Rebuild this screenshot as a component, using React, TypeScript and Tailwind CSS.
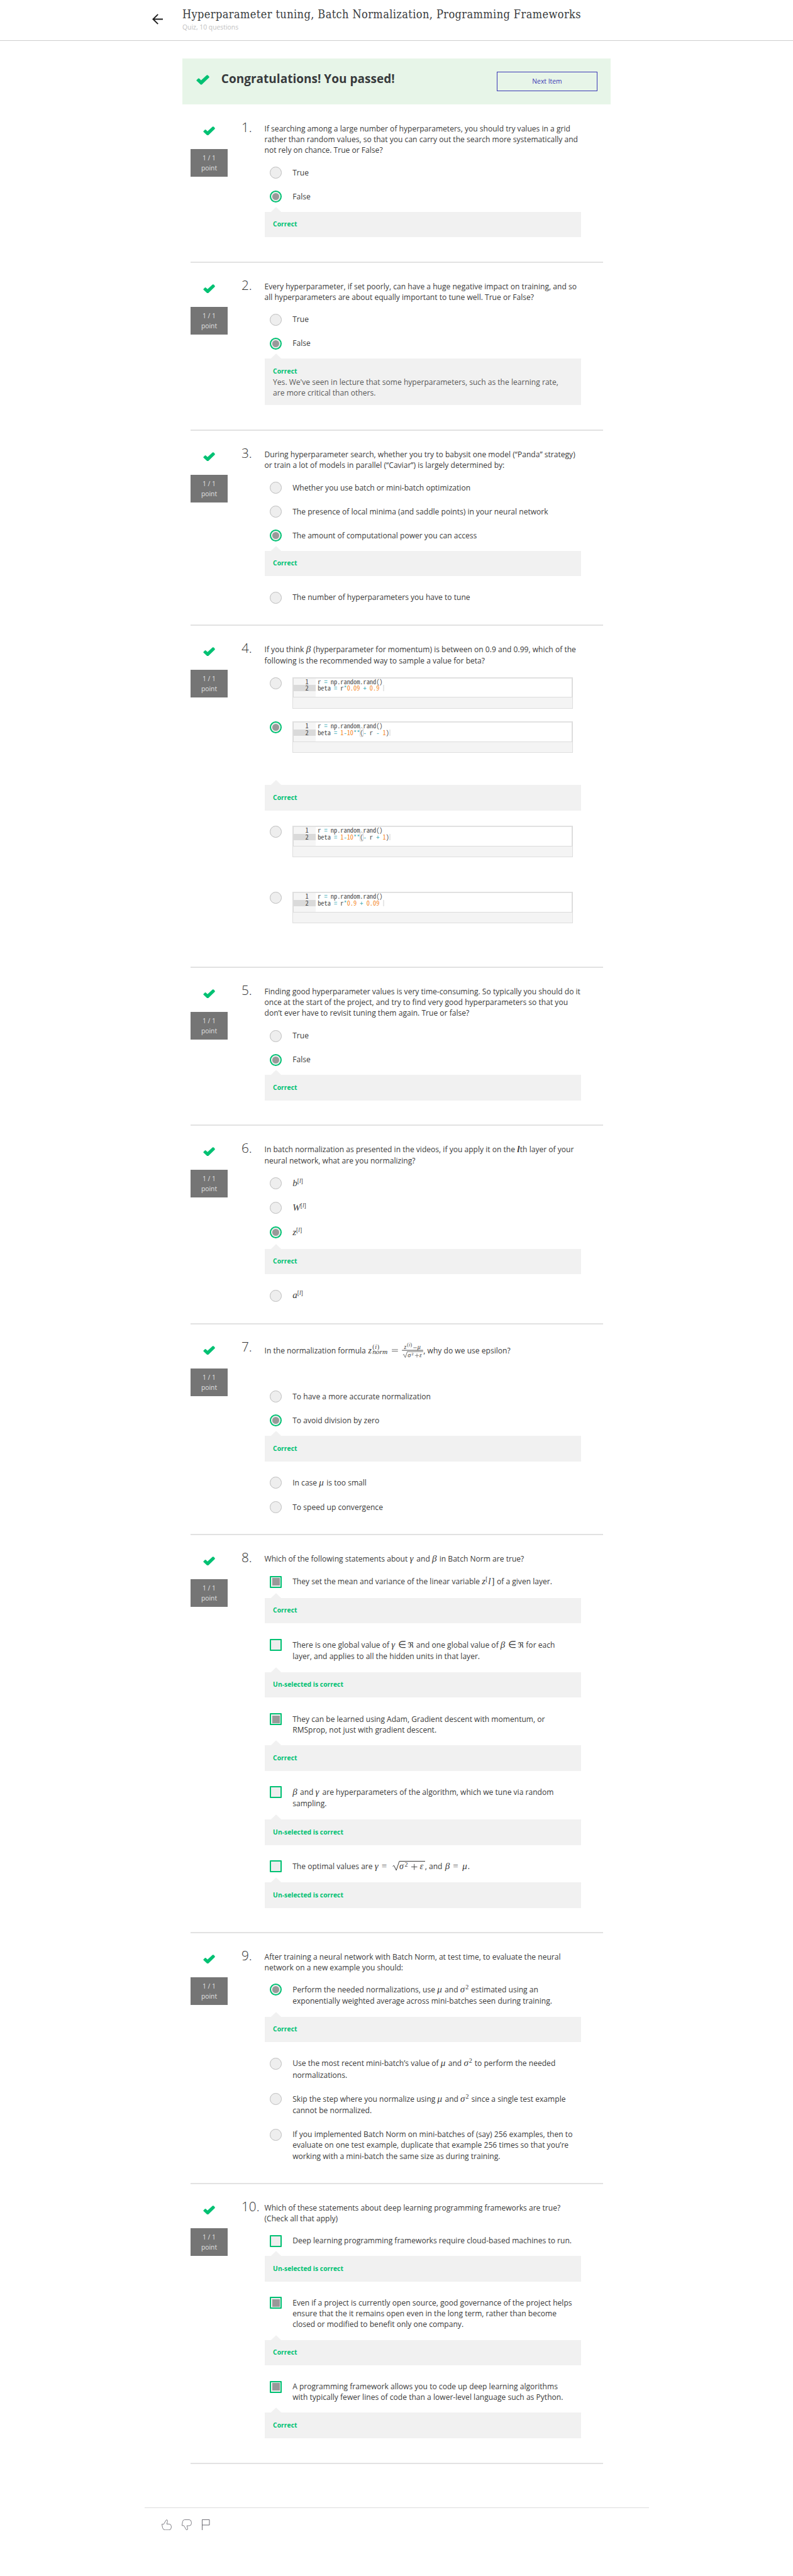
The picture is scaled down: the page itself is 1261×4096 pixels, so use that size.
import type { ReactNode } from "react";

function Tick({ className }: { className: string }) {
  return (
    <svg viewBox="0 0 92 70" className={className} preserveAspectRatio="none">
      <path
        d="M3 36 L14 25 Q18 22 22 26 L34 38 L72 3 Q77 -1 82 3 L90 12 Q93 16 89 20 L40 67 Q35 71 30 67 L3 42 Q0 39 3 36Z"
        fill="#00c173"
      />
    </svg>
  );
}

function M({ w, children }: { w: string; children: ReactNode }) {
  return (
    <span className={`inline-block whitespace-nowrap font-['Liberation_Serif',serif] text-[15px] leading-[0] italic ${w}`}>
      {children}
    </span>
  );
}

function Sup({ children }: { children: ReactNode }) {
  return <span className="relative -top-[5px] text-[9.5px]">{children}</span>;
}

function Up({ children }: { children: ReactNode }) {
  return <span className="not-italic">{children}</span>;
}

const Rel = ({ children }: { children: ReactNode }) => (
  <span className="ml-[5px] inline-block w-[15px] text-[15px] not-italic">{children}</span>
);
const Beta = () => <M w="w-[8.6px]">β</M>;
const Gamma = () => <M w="w-[7.8px]">γ</M>;
const Mu = () => <M w="w-[8.8px]">μ</M>;
const Sigma2 = () => (
  <M w="w-[14.2px]">
    σ<span className="relative -top-[5px] ml-px text-[10px] not-italic">2</span>
  </M>
);
const Real = () => <span className="font-['DejaVu_Sans',sans-serif] text-[12px] not-italic">ℜ</span>;

function LayerTerm({ v }: { v: string }) {
  return (
    <M w="w-auto">
      {v}
      <Sup>
        <Up>[</Up>l<Up>]</Up>
      </Sup>
    </M>
  );
}

function NormFormula() {
  return (
    <svg
      viewBox="745 50 385 115"
      className="mt-[-12px] mb-[-8.7px] inline-block h-[26.4px] w-[88.4px] align-baseline font-['Liberation_Serif',serif] italic"
      fill="#3b3b3b"
    >
      <text x="747" y="127" fontSize="61">z</text>
      <text x="777" y="98" fontSize="44" textLength="47"><tspan fontStyle="normal">(</tspan>i<tspan fontStyle="normal">)</tspan></text>
      <text x="776" y="133" fontSize="44" textLength="105" lengthAdjust="spacingAndGlyphs">norm</text>
      <path d="M911 102h42M911 114h42" stroke="#3b3b3b" strokeWidth="3" />
      <text x="996" y="98" fontSize="42">z</text>
      <text x="1016" y="82" fontSize="34" textLength="35"><tspan fontStyle="normal">(</tspan>i<tspan fontStyle="normal">)</tspan></text>
      <path d="M1060 89h24" stroke="#3b3b3b" strokeWidth="3" />
      <text x="1088" y="98" fontSize="44">μ</text>
      <path d="M981 107h147" stroke="#3b3b3b" strokeWidth="4" />
      <path d="M988 139l6-4 10 22 14-41h110" fill="none" stroke="#3b3b3b" strokeWidth="3" />
      <text x="1021" y="153" fontSize="44">σ</text>
      <text x="1047" y="140" fontSize="29" fontStyle="normal">2</text>
      <path d="M1071 143h28M1085 129v28" stroke="#3b3b3b" strokeWidth="2.5" />
      <text x="1102" y="153" fontSize="42">ε</text>
    </svg>
  );
}

function SqrtFormula() {
  return (
    <svg
      viewBox="0 0 52 17"
      className="mt-[-6px] mb-[-3px] inline-block h-[17px] w-[52px] align-baseline font-['Liberation_Serif',serif] italic"
      fill="#3b3b3b"
    >
      <path d="M.5 9.5l2-1.2 3.6 7.6L11 1.5h41" fill="none" stroke="#3b3b3b" strokeWidth="1" />
      <text x="11" y="14" fontSize="14">σ</text>
      <text x="19.5" y="9.5" fontSize="10" fontStyle="normal">2</text>
      <path d="M30 10.5h9.5M34.75 5.8v9.4" stroke="#3b3b3b" strokeWidth="0.9" />
      <text x="43.5" y="14" fontSize="14.5">ε</text>
    </svg>
  );
}

function Lines({ lines, loose }: { lines: ReactNode[]; loose?: boolean }) {
  return (
    <>
      {lines.map((l, i) => (
        <div key={i} className={`whitespace-nowrap ${loose && i === 0 ? "h-[18.4px] leading-[17.9px]" : "h-[17.23px] leading-[17.23px]"}`}>
          {l}
        </div>
      ))}
    </>
  );
}

type Kind = "radio" | "radioOn" | "box" | "boxOn";

function Mark({ kind }: { kind: Kind }) {
  if (kind === "radio")
    return <span className="h-[19px] w-[19px] shrink-0 rounded-full border border-[#bdbdbd] bg-[#eeeeee]" />;
  if (kind === "radioOn")
    return (
      <span className="flex h-[19px] w-[19px] shrink-0 items-center justify-center rounded-full border-2 border-[#00c173] bg-[#eeeeee]">
        <span className="h-[11px] w-[11px] rounded-full bg-[#999999]" />
      </span>
    );
  return (
    <span className="flex h-[19px] w-[19px] shrink-0 items-center justify-center rounded-[1px] border-2 border-[#00c173] bg-[#eeeeee]">
      {kind === "boxOn" && <span className="h-[12px] w-[12px] bg-[#999999]" />}
    </span>
  );
}

function Option({ kind = "radio", h = "h-[38px]", children }: { kind?: Kind; h?: string; children: ReactNode }) {
  return (
    <div className={`flex items-start pl-[8.7px] ${h}`}>
      <Mark kind={kind} />
      <div className="ml-[17px] pt-[0.5px]">{children}</div>
    </div>
  );
}

function Feedback({ label = "Correct", gap = "mb-[24.7px]", children }: { label?: string; gap?: string; children?: ReactNode }) {
  return (
    <div className={`relative w-[503.5px] bg-[#f1f1f1] pl-[13.6px] ${children ? "h-[74.4px]" : "h-[40.5px]"} ${gap}`}>
      <svg viewBox="0 0 18 8" className="absolute -top-[8px] left-[9px] h-[8.5px] w-[18px]">
        <path d="M9 0L18 8.5H0Z" fill="#f1f1f1" />
      </svg>
      <div className="pt-[11.5px] text-[10.34px] leading-[17px] font-bold whitespace-nowrap text-[#00c173]">{label}</div>
      {children && <div className="mt-[0.3px] text-[#595959]">{children}</div>}
    </div>
  );
}

function Code({ line, tail = "" }: { line: ReactNode; tail?: string }) {
  return (
    <div className="-mt-[0.5px] flex h-[50px] w-[445.5px] flex-col border border-[#dedede] bg-[#f4f4f4] font-['Noto_Sans_Mono_CJK_SC','Liberation_Mono',monospace] text-[10.34px] leading-[10.4px] tracking-normal text-[#4a4a4a]">
      <div className="flex h-[31.5px] border border-t-[#e4e4e4] border-[#dcdcdc] bg-white">
        <div className="flex w-[34.5px] flex-col bg-[#f5f5f5] text-right text-[#444]">
          <div className="h-[10.4px] pr-[11px]">1</div>
          <div className="h-[10.4px] bg-[#dadada] pr-[11px]">2</div>
        </div>
        <div className="pl-[3.5px] whitespace-pre">
          <div className="h-[10.4px]">
            r <span className="text-[#3aaab5]">=</span> np.random.rand()
          </div>
          <div className="flex h-[10.4px]">
            <span>
              {line}
              {tail}
            </span>
            <span className="h-[10.4px] w-[2px] bg-[#e8e8e8]" />
          </div>
        </div>
      </div>
    </div>
  );
}

const Op = ({ children }: { children: ReactNode }) => <span className="text-[#3aaab5]">{children}</span>;
const Num = ({ children }: { children: ReactNode }) => <span className="text-[#f5871f]">{children}</span>;
const Paren = () => <span className="rounded-[2px] outline outline-1 -outline-offset-1 outline-[#d5d5d5]">(</span>;

function Question({ n, h, head, q, loose, children }: { n: number; h: string; head: string; q: ReactNode[]; loose?: boolean; children: ReactNode }) {
  return (
    <section className={`flex border-b-2 border-[#e2e2e2] ${h}`}>
      <div className="flex w-[59px] shrink-0 flex-col items-center">
        <Tick className="mt-[33.5px] h-[14.5px] w-[19px]" />
        <div className="mt-[22.4px] h-[44px] w-[59px] bg-[#757575] pt-[7px] text-center text-[10.34px] leading-[15.5px] text-[#e0e0e0]">
          <div>1 / 1</div>
          <div>point</div>
        </div>
      </div>
      <div className="w-[58.5px] shrink-0 pt-[20px] pl-[22px] text-[20.7px] leading-[30px] font-light whitespace-nowrap text-[#333]">{n}.</div>
      <div>
        <div className={`pt-[29px] ${head}`}>
          <Lines lines={q} loose={loose} />
        </div>
        {children}
      </div>
    </section>
  );
}

export default function App() {
  return (
    <div className="h-[4096px] w-[1261px] overflow-hidden bg-white font-['Open_Sans',sans-serif] text-[12.06px] leading-[17.23px] tracking-[0.015px] text-[#3b3b3b]">
      <header className="flex h-[65px] border-b border-[#cfcfcf] pl-[242px]">
        <svg viewBox="0 0 17 17" className="mt-[22px] h-[17px] w-[17px]" fill="none" stroke="#1f1f1f" strokeWidth="1.9">
          <path d="M1.3 8.5H17M9.2 .9L1.4 8.5l7.8 7.6" />
        </svg>
        <div className="pl-[31px]">
          <h1 className="mt-[9px] h-[27px] font-['DejaVu_Serif_Condensed','DejaVu_Serif',serif] text-[18px] leading-[27px] tracking-[0.41px] whitespace-nowrap text-[#373a3c]">
            Hyperparameter tuning, Batch Normalization, Programming Frameworks
          </h1>
          <p className="text-[10.34px] leading-[14px] text-[#c2c2c2]">Quiz, 10 questions</p>
        </div>
      </header>

      <div className="mt-[28px] ml-[290px] flex h-[72.5px] w-[681px] bg-[#e7f5e8] pl-[22.3px]">
        <Tick className="mt-[26px] h-[16px] w-[21px]" />
        <h2 className="mt-[12px] ml-[18.5px] h-[40px] flex-1 text-[19px] leading-[40px] font-bold text-[#373a3c]">Congratulations! You passed!</h2>
        <button className="mt-[21px] mr-[21px] h-[31px] w-[160px] border border-[#3a38b5] text-[10.34px] text-[#3a38b5]">Next Item</button>
      </div>

      <main className="mt-[1.5px] ml-[303px] w-[655.5px]">
        <Question
          n={1}
          h="h-[251px]"
          head="h-[98.2px]"
          q={[
            "If searching among a large number of hyperparameters, you should try values in a grid",
            "rather than random values, so that you can carry out the search more systematically and",
            "not rely on chance. True or False?",
          ]}
        >
          <Option>True</Option>
          <Option kind="radioOn" h="h-[33.4px]">False</Option>
          <Feedback />
        </Question>

        <Question
          n={2}
          h="h-[267px]"
          head="h-[80.5px]"
          q={[
            "Every hyperparameter, if set poorly, can have a huge negative impact on training, and so",
            "all hyperparameters are about equally important to tune well. True or False?",
          ]}
        >
          <Option>True</Option>
          <Option kind="radioOn" h="h-[33.5px]">False</Option>
          <Feedback>
            <Lines lines={["Yes. We've seen in lecture that some hyperparameters, such as the learning rate,", "are more critical than others."]} />
          </Feedback>
        </Question>

        <Question
          n={3}
          h="h-[310px]"
          head="h-[81.3px]"
          q={[
            "During hyperparameter search, whether you try to babysit one model (“Panda” strategy)",
            "or train a lot of models in parallel (“Caviar”) is largely determined by:",
          ]}
        >
          <Option>Whether you use batch or mini-batch optimization</Option>
          <Option>The presence of local minima (and saddle points) in your neural network</Option>
          <Option kind="radioOn" h="h-[33.3px]">The amount of computational power you can access</Option>
          <Feedback />
          <Option>The number of hyperparameters you have to tune</Option>
        </Question>

        <Question
          n={4}
          h="h-[544px]"
          head="h-[81.7px]"
          loose
          q={[
            <>If you think <Beta /> (hyperparameter for momentum) is between on 0.9 and 0.99, which of the</>,
            "following is the recommended way to sample a value for beta?",
          ]}
        >
          <Option h="h-[70.6px]">
            <Code line={<>beta <Op>=</Op> r<Op>*</Op><Num>0.09</Num> <Op>+</Op> <Num>0.9</Num></>} tail=" " />
          </Option>
          <Option kind="radioOn" h="h-[100.9px]">
            <Code line={<>beta <Op>=</Op> <Num>1</Num><Op>-</Op><Num>10</Num><Op>**</Op><Paren /><Op>-</Op> r <Op>-</Op> <Num>1</Num>)</>} />
          </Option>
          <Feedback />
          <Option h="h-[104.9px]">
            <Code line={<>beta <Op>=</Op> <Num>1</Num><Op>-</Op><Num>10</Num><Op>**</Op><Paren /><Op>-</Op> r <Op>+</Op> <Num>1</Num>)</>} />
          </Option>
          <Option>
            <Code line={<>beta <Op>=</Op> r<Op>*</Op><Num>0.9</Num> <Op>+</Op> <Num>0.09</Num></>} tail=" " />
          </Option>
        </Question>

        <Question
          n={5}
          h="h-[251px]"
          head="h-[98.5px]"
          q={[
            "Finding good hyperparameter values is very time-consuming. So typically you should do it",
            "once at the start of the project, and try to find very good hyperparameters so that you",
            "don’t ever have to revisit tuning them again. True or false?",
          ]}
        >
          <Option>True</Option>
          <Option kind="radioOn" h="h-[33.6px]">False</Option>
          <Feedback />
        </Question>

        <Question
          n={6}
          h="h-[316px]"
          head="h-[82.1px]"
          loose
          q={[
            <>In batch normalization as presented in the videos, if you apply it on the <M w="w-[4.6px]"><b>l</b></M>th layer of your</>,
            "neural network, what are you normalizing?",
          ]}
        >
          <Option h="h-[39.2px]"><LayerTerm v="b" /></Option>
          <Option h="h-[39.2px]"><LayerTerm v="W" /></Option>
          <Option kind="radioOn" h="h-[35.1px]"><LayerTerm v="z" /></Option>
          <Feedback />
          <Option><LayerTerm v="a" /></Option>
        </Question>

        <Question
          n={7}
          h="h-[335px]"
          head="h-[105px]"
          q={[<div className="mt-[4px]">In the normalization formula <NormFormula />, why do we use epsilon?</div>]}
        >
          <Option>To have a more accurate normalization</Option>
          <Option kind="radioOn" h="h-[34px]">To avoid division by zero</Option>
          <Feedback />
          <Option h="h-[39.3px]">In case <Mu /> is too small</Option>
          <Option>To speed up convergence</Option>
        </Question>

        <Question
          n={8}
          h="h-[633px]"
          head="h-[64.7px]"
          q={[<>Which of the following statements about <Gamma /> and <Beta /> in Batch Norm are true?</>]}
        >
          <Option kind="boxOn" h="h-[35.2px]">
            They set the mean and variance of the linear variable{" "}
            <M w="w-[20.5px]">
              z<Sup><Up>[</Up></Sup>
              <span className="ml-px">l</span>
              <span className="ml-px not-italic">]</span>
            </M>{" "}
            of a given layer.
          </Option>
          <Feedback />
          <Option kind="box" h="h-[52.8px]">
            <Lines
              loose
              lines={[
                <>
                  There is one global value of <M w="w-[36.5px]">γ<Rel>∈</Rel><Real /></M> and one global value of{" "}
                  <M w="w-[37.3px]">β<Rel>∈</Rel><Real /></M> for each
                </>,
                "layer, and applies to all the hidden units in that layer.",
              ]}
            />
          </Option>
          <Feedback label="Un-selected is correct" />
          <Option kind="boxOn" h="h-[51.2px]">
            <Lines lines={["They can be learned using Adam, Gradient descent with momentum, or", "RMSprop, not just with gradient descent."]} />
          </Option>
          <Feedback />
          <Option kind="box" h="h-[52.6px]">
            <Lines loose lines={[<><Beta /> and <Gamma /> are hyperparameters of the algorithm, which we tune via random</>, "sampling."]} />
          </Option>
          <Feedback label="Un-selected is correct" />
          <Option kind="box" h="h-[35.2px]">
            The optimal values are <M w="w-[28px]">γ<Rel>=</Rel></M>
            <SqrtFormula />, and <M w="ml-px w-[36px]">β<Rel>=</Rel>μ</M>.
          </Option>
          <Feedback label="Un-selected is correct" />
        </Question>

        <Question
          n={9}
          h="h-[399px]"
          head="h-[80.3px]"
          q={["After training a neural network with Batch Norm, at test time, to evaluate the neural", "network on a new example you should:"]}
        >
          <Option kind="radioOn" h="h-[52.4px]">
            <Lines
              loose
              lines={[
                <>Perform the needed normalizations, use <Mu /> and <Sigma2 /> estimated using an</>,
                "exponentially weighted average across mini-batches seen during training.",
              ]}
            />
          </Option>
          <Feedback />
          <Option h="h-[56.5px]">
            <Lines loose lines={[<>Use the most recent mini-batch’s value of <Mu /> and <Sigma2 /> to perform the needed</>, "normalizations."]} />
          </Option>
          <Option h="h-[56.3px]">
            <Lines loose lines={[<>Skip the step where you normalize using <Mu /> and <Sigma2 /> since a single test example</>, "cannot be normalized."]} />
          </Option>
          <Option h="h-[56px]">
            <Lines
              lines={[
                "If you implemented Batch Norm on mini-batches of (say) 256 examples, then to",
                "evaluate on one test example, duplicate that example 256 times so that you’re",
                "working with a mini-batch the same size as during training.",
              ]}
            />
          </Option>
        </Question>

        <Question
          n={10}
          h="h-[445px]"
          head="h-[80.9px]"
          q={["Which of these statements about deep learning programming frameworks are true?", "(Check all that apply)"]}
        >
          <Option kind="box" h="h-[33.4px]">Deep learning programming frameworks require cloud-based machines to run.</Option>
          <Feedback label="Un-selected is correct" />
          <Option kind="boxOn" h="h-[68.1px]">
            <Lines
              lines={[
                "Even if a project is currently open source, good governance of the project helps",
                "ensure that the it remains open even in the long term, rather than become",
                "closed or modified to benefit only one company.",
              ]}
            />
          </Option>
          <Feedback />
          <Option kind="boxOn" h="h-[50.5px]">
            <Lines
              lines={[
                "A programming framework allows you to code up deep learning algorithms",
                "with typically fewer lines of code than a lower-level language such as Python.",
              ]}
            />
          </Option>
          <Feedback />
        </Question>
      </main>

      <footer className="mt-[68.5px] ml-[229.5px] flex w-[802px] gap-[16px] border-t border-[#dcdcdc] pt-[18px] pl-[27.5px]">
        <svg viewBox="38 64 72 78" className="h-[17.5px] w-[16px]" fill="none" stroke="#63636b" strokeWidth="3.6" strokeLinejoin="round">
          <path d="M40 98H53L70 69Q75 64 79 69Q83 76 75 97H92Q106 98 107 112V122Q106 138 92 139H62Q49 138 45 124Z" />
        </svg>
        <svg viewBox="38 64 72 78" className="h-[17.5px] w-[16px]" fill="none" stroke="#63636b" strokeWidth="3.6" strokeLinejoin="round">
          <path d="M40 108H53L70 137Q75 142 79 137Q83 130 75 109H92Q106 108 107 94V84Q106 67 92 66H58Q46 67 44 80Z" />
        </svg>
        <svg viewBox="0 0 54 76" className="h-[17.5px] w-[12.5px]" fill="none" stroke="#4c4c55" strokeWidth="3.6">
          <path d="M2 76V2H52V39H2" />
        </svg>
      </footer>
    </div>
  );
}
